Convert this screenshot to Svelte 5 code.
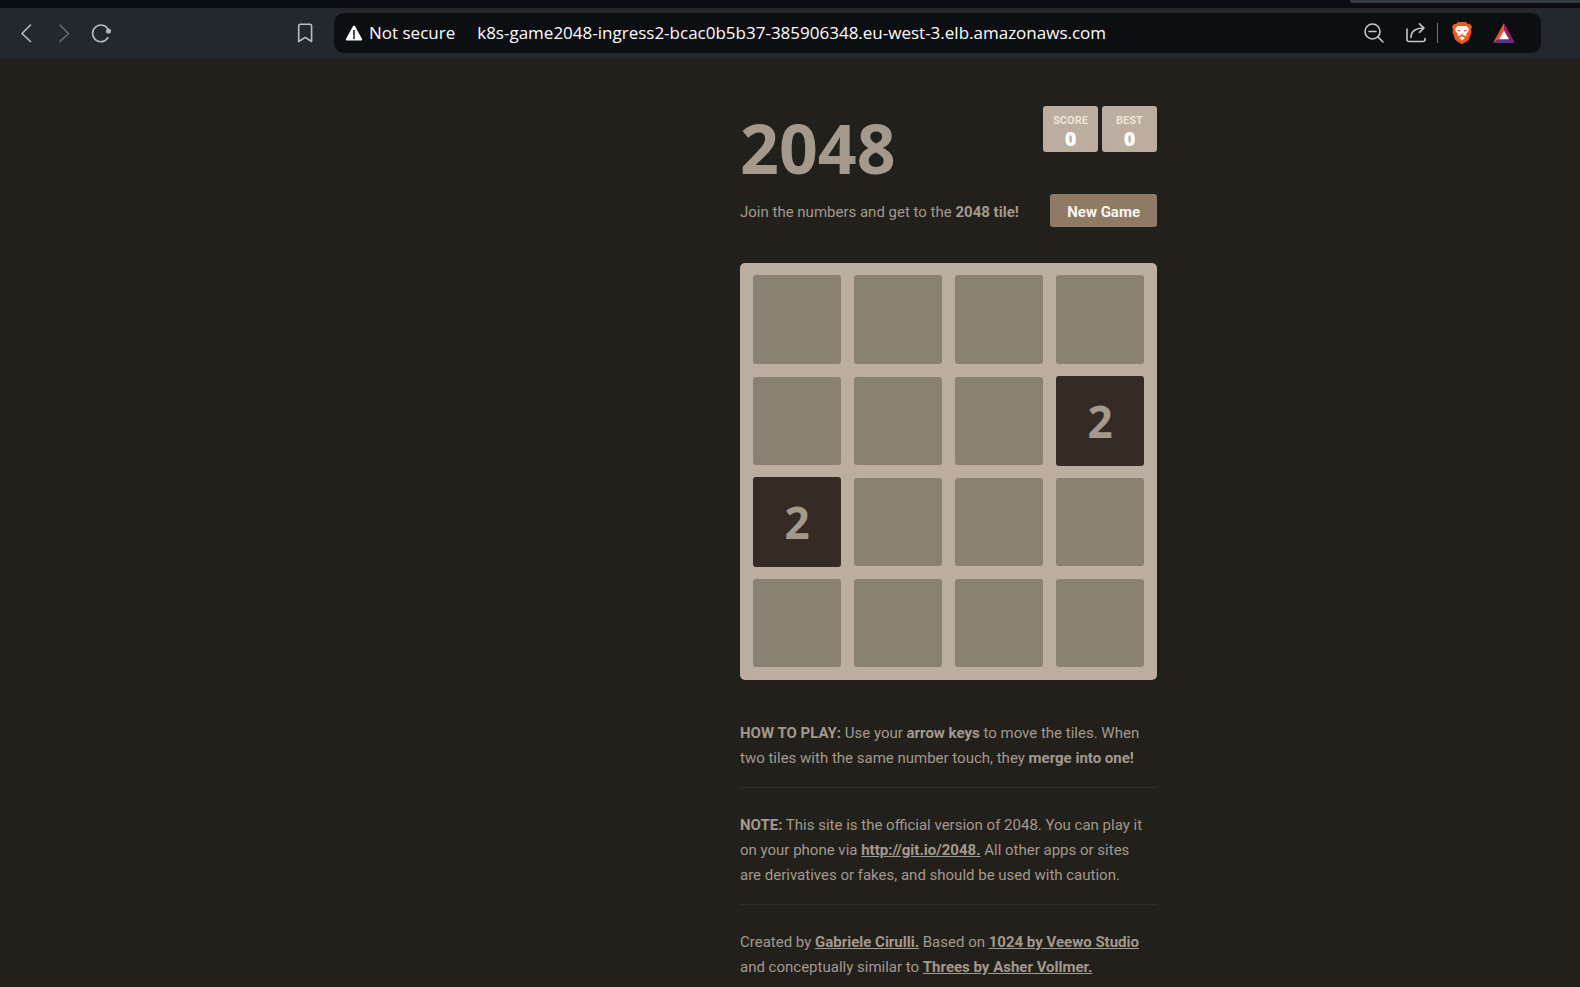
<script>
  const board = [
    [0, 0, 0, 0],
    [0, 0, 0, 2],
    [2, 0, 0, 0],
    [0, 0, 0, 0]
  ];
  const url = 'k8s-game2048-ingress2-bcac0b5b37-385906348.eu-west-3.elb.amazonaws.com';
</script>

<div class="window">
  <div class="tabs"><div class="tab"></div></div>
  <header class="toolbar">
    <nav class="history" aria-label="Navigation">
      <button aria-label="Back">
        <svg width="22" height="22" viewBox="0 0 22 22"><path d="M14.500 3 6 11.500 14.500 19.500" /></svg>
      </button>
      <button class="faded" aria-label="Forward">
        <svg width="22" height="22" viewBox="0 0 22 22"><path d="M7 3 15.500 11.500 7 19.500" /></svg>
      </button>
      <button aria-label="Reload">
        <svg width="22" height="22" viewBox="0 0 22 22"><path d="M17.900 15.800A8.300 8.300 0 1 1 18.200 7.500" /><circle class="solid" cx="18.500" cy="9" r="2.600" /></svg>
      </button>
    </nav>
    <button aria-label="Bookmark">
      <svg width="22" height="22" viewBox="0 0 22 22"><path d="M4.700 4Q4.700 2.200 6.500 2.200H15.800Q17.600 2.200 17.600 4V19.500L11.200 15.300 4.700 19.500Z" /></svg>
    </button>
    <div class="address">
      <svg class="warn" width="18" height="18" viewBox="0 0 18 18"><path d="M9 2.500 16.200 15.500H1.800Z" fill="#fff" stroke="#fff" stroke-width="2" stroke-linejoin="round" /><path d="M9 6.500V11M9 12.600V14.300" stroke="#24262b" stroke-width="1.700" /></svg>
      <span class="security">Not secure</span>
      <input aria-label="Address" value={url} />
      <div class="actions">
        <button aria-label="Zoom out">
          <svg width="22" height="22" viewBox="0 0 22 22"><circle cx="9.500" cy="9.500" r="7.500" /><path d="M6 9.500H13M15 15 20 20" /></svg>
        </button>
        <button aria-label="Share">
          <svg width="22" height="22" viewBox="0 0 22 22"><path d="M2 7V17.500Q2 19.500 4 19.500H18Q20 19.500 20 17.500V16.500M6 15.500C6 9 10 6 19 6M14.500 1.800 19 6 14.500 10.300" /></svg>
        </button>
        <span class="rule"></span>
        <button class="shield" aria-label="Shields">
          <svg width="22" height="24" viewBox="0 0 22 24"><path d="M7 1H15L17 3 19 2.800 21 6 20 8.500 20.500 11 18 18.500Q17 20 11 23.200 5 20 4 18.500L1.500 11 2 8.500 1 6 3 2.800 5 3Z" fill="#f0561d" stroke="none" /><path d="M6.500 4.800 9 5.300 11 4.900 13 5.300 15.500 4.800 18 8 17.300 10.500 15.200 13 15.500 15 12.300 14.200 11 13.600 9.700 14.200 6.500 15 6.800 13 4.700 10.500 4 8ZM8 17 11 15.200 14 17 11 19.500Z" fill="#fff" stroke="none" /><path d="M6 8.800 9.300 9.300 8.800 10.600 7 10.300ZM16 8.800 12.700 9.300 13.200 10.600 15 10.300ZM9.500 12.800H12.500L11 14Z" fill="#f0561d" stroke="none" /></svg>
        </button>
        <button class="rewards" aria-label="Rewards">
          <svg width="24" height="22" viewBox="0 0 24 22"><path d="M12 1 1 21 7.500 17 12 9Z" fill="#f4502e" stroke="none" /><path d="M12 1 23 21 16.500 17 12 9Z" fill="#961f63" stroke="none" /><path d="M1 21H23L16.500 17H7.500Z" fill="#5b2f91" stroke="none" /><path d="M12 8.500 17 17.300H7Z" fill="#fff" stroke="none" /></svg>
        </button>
      </div>
    </div>
  </header>

  <main>
    <div class="container">
      <div class="heading">
        <h1>2048</h1>
        <div class="scores">
          <div class="score"><span>SCORE</span><b>0</b></div>
          <div class="score"><span>BEST</span><b>0</b></div>
        </div>
      </div>
      <div class="intro">
        <p>Join the numbers and get to the <strong>2048 tile!</strong></p>
        <button class="new-game">New Game</button>
      </div>
      <div class="board">
        {#each board as row}
          {#each row as value}
            <div class="cell" class:tile={value > 0}>{value || ''}</div>
          {/each}
        {/each}
      </div>
      <p><strong>HOW TO PLAY:</strong> Use your <strong>arrow keys</strong> to move the tiles. When<br />two tiles with the same number touch, they <strong>merge into one!</strong></p>
      <hr />
      <p><strong>NOTE:</strong> This site is the official version of 2048. You can play it<br />on your phone via <a href="http://git.io/2048">http://git.io/2048.</a> All other apps or sites<br />are derivatives or fakes, and should be used with caution.</p>
      <hr />
      <p>Created by <a href="#author">Gabriele Cirulli.</a> Based on <a href="#veewo">1024 by Veewo Studio</a><br />and conceptually similar to <a href="#threes">Threes by Asher Vollmer.</a></p>
    </div>
  </main>
</div>

<style>
  :global(body) { background: #22201b; }
  * { box-sizing: border-box; }
  .window { min-height: 100vh; background: #22201b; color: #a3998d; font-family: Roboto, sans-serif; }
  button { border: 0; padding: 0; background: none; color: inherit; font: inherit; display: flex; cursor: pointer; }
  svg { display: block; fill: none; stroke: #b5bfc3; stroke-width: 1.6; stroke-linecap: round; stroke-linejoin: round; }
  .solid { fill: #a9b3b9; stroke: none; }
  .tabs { height: 8px; background: #0c0d12; display: flex; justify-content: flex-end; }
  .tab { width: 230px; height: 3px; background: #343b3f; border-bottom-left-radius: 8px; }
  .toolbar { height: 51px; background: #22282b; display: flex; align-items: center; padding: 0 39px 1px 16px; }
  .history { display: flex; gap: 15px; margin-right: auto; }
  .faded { opacity: 0.45; }
  .address { width: 1207px; min-width: 0; height: 40px; margin-left: 18px; border-radius: 10px; background: #0d0e12; color: #fff; display: flex; align-items: center; padding: 0 25px 0 11px; font-family: "Open Sans", sans-serif; font-size: 17px; }
  .warn { flex: none; }
  .security { margin: 0 22px 2px 6px; white-space: nowrap; }
  input { flex: 1; min-width: 0; border: 0; padding: 0 0 2px; background: none; color: inherit; font: inherit; outline: none; }
  .actions { display: flex; align-items: center; }
  .actions svg { stroke: #c5c7ca; }
  .actions button:nth-of-type(2) { margin-left: 20px; }
  .rule { width: 1px; height: 20px; margin-left: 10px; background: #77797d; }
  .shield { margin-left: 13px; }
  .rewards { margin-left: 19px; }
  main { display: grid; grid-template-columns: minmax(0, 740fr) 417px minmax(0, 423fr); padding-top: 47px; }
  .container { grid-column: 2; font-size: 15px; line-height: 25px; white-space: nowrap; }
  .heading { display: flex; justify-content: space-between; align-items: flex-start; height: 88px; }
  h1 { margin: 0; font-family: "Noto Sans", sans-serif; font-size: 68px; line-height: 84px; font-weight: 700; }
  .scores { display: flex; gap: 4px; }
  .score { width: 55px; height: 46px; border-radius: 3px; background: #bbada0; color: #fff; padding-top: 7px; display: flex; flex-direction: column; align-items: center; font-weight: 700; }
  .score span { font-size: 11px; line-height: 15px; color: #eee4da; }
  .score b { font-family: "Noto Sans", sans-serif; font-size: 20px; line-height: 22px; }
  .intro { display: flex; justify-content: space-between; align-items: center; margin-bottom: 36px; }
  p { margin: 0; }
  .intro p { padding-top: 3px; }
  strong, a { font-weight: 700; color: inherit; }
  .new-game { height: 33px; padding: 3px 17px 0; border-radius: 3px; background: #8f7a66; color: #f9f6f2; font-weight: 700; align-items: center; }
  .board { display: grid; grid-template-columns: repeat(4, 88px); grid-template-rows: 89px repeat(3, 88px); gap: 13px; padding: 12px 13px 13px; border-radius: 5px; background: #bbada0; margin-bottom: 41px; }
  .cell { border-radius: 3px; background: #8a8074; }
  .tile { margin: -1px 0; background: #352a24; font-family: "Noto Sans", sans-serif; font-size: 44px; line-height: 90px; font-weight: 700; text-align: center; }
  hr { border: 0; height: 1px; background: #302e29; margin: 16px 0 25px; }
</style>
